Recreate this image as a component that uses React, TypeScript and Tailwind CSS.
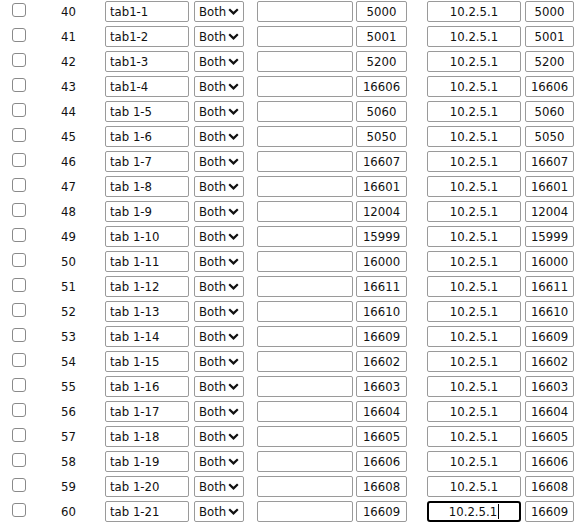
import { useState } from "react";

type Mapping = {
  id: number;
  name: string;
  port: string;
};

const mappings: Mapping[] = [
  { id: 40, name: "tab1-1", port: "5000" },
  { id: 41, name: "tab1-2", port: "5001" },
  { id: 42, name: "tab1-3", port: "5200" },
  { id: 43, name: "tab1-4", port: "16606" },
  { id: 44, name: "tab 1-5", port: "5060" },
  { id: 45, name: "tab 1-6", port: "5050" },
  { id: 46, name: "tab 1-7", port: "16607" },
  { id: 47, name: "tab 1-8", port: "16601" },
  { id: 48, name: "tab 1-9", port: "12004" },
  { id: 49, name: "tab 1-10", port: "15999" },
  { id: 50, name: "tab 1-11", port: "16000" },
  { id: 51, name: "tab 1-12", port: "16611" },
  { id: 52, name: "tab 1-13", port: "16610" },
  { id: 53, name: "tab 1-14", port: "16609" },
  { id: 54, name: "tab 1-15", port: "16602" },
  { id: 55, name: "tab 1-16", port: "16603" },
  { id: 56, name: "tab 1-17", port: "16604" },
  { id: 57, name: "tab 1-18", port: "16605" },
  { id: 58, name: "tab 1-19", port: "16606" },
  { id: 59, name: "tab 1-20", port: "16608" },
  { id: 60, name: "tab 1-21", port: "16609" },
];

const field =
  "block box-border h-[21px] rounded-[2px] border border-[#9a9a9a] bg-white px-[4px] py-0 text-[13px] leading-[19px] text-[#111] outline-none";

const Chevron = () => (
  <svg width="11" height="7" viewBox="0 0 11 7" className="pointer-events-none absolute right-[5px] top-[7px]">
    <path d="M1.2 1.2 5.5 5.4 9.8 1.2" fill="none" stroke="#111" strokeWidth="2.2" />
  </svg>
);

const Row = ({ m, last }: { m: Mapping; last: boolean }) => {
  const [checked, setChecked] = useState(false);
  return (
    <div className="flex h-[25px] items-start pt-[1px]">
      <div className="w-[37px] pl-[12px] pt-[2px]">
        <button
          type="button"
          onClick={() => setChecked(!checked)}
          className={`block h-[14px] w-[14px] rounded-[3px] border border-[#8a8a8a] ${checked ? "bg-[#0075ff]" : "bg-white"}`}
        />
      </div>
      <div className="w-[63px] pt-[1px] text-center text-[13px] leading-[19px] text-[#111]">{m.id}</div>
      <input className={`${field} ml-[5px] w-[84px]`} defaultValue={m.name} />
      <div className="relative ml-[5px]">
        <select className={`${field} w-[50px] appearance-none pr-[14px]`} defaultValue="Both">
          <option>TCP</option>
          <option>UDP</option>
          <option>Both</option>
        </select>
        <Chevron />
      </div>
      <input className={`${field} ml-[13px] w-[96px]`} defaultValue="" />
      <input className={`${field} ml-[3px] w-[51px] text-center`} defaultValue={m.port} />
      {last ? (
        <div className="ml-[20px] box-border flex h-[21px] w-[94px] items-center justify-center rounded-[3px] border-2 border-black bg-white text-[13px] text-[#111]">
          <span>10.2.5.1</span>
          <span className="ml-[1px] h-[15px] w-[1px] bg-black" />
        </div>
      ) : (
        <input className={`${field} ml-[20px] w-[94px] text-center`} defaultValue="10.2.5.1" />
      )}
      <input className={`${field} ml-[4px] w-[49px] text-center`} defaultValue={m.port} />
    </div>
  );
};

export default function App() {
  return (
    <div
      className="h-[524px] w-[575px] overflow-hidden bg-white"
      style={{ fontFamily: '"DejaVu Sans Condensed", "Noto Sans", sans-serif' }}
    >
      {mappings.map((m, i) => (
        <Row key={m.id} m={m} last={i === mappings.length - 1} />
      ))}
    </div>
  );
}
